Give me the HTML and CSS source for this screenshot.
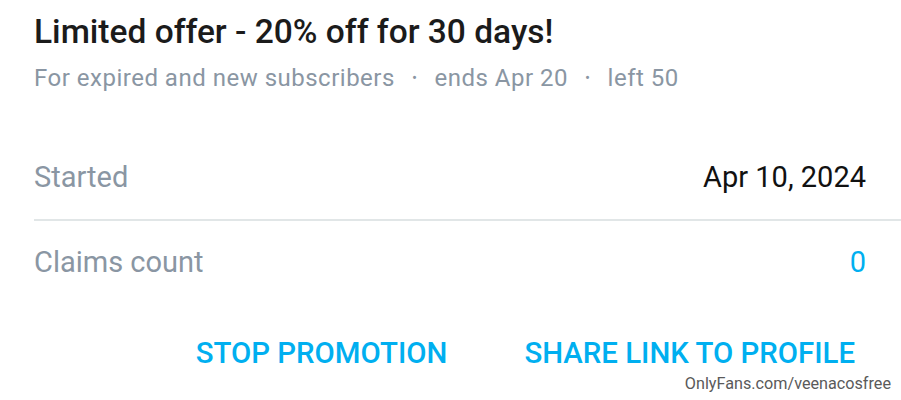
FILE: index.html
```html
<!DOCTYPE html>
<html>
<head>
<meta charset="utf-8">
<link rel="stylesheet" href="styles.css">
</head>
<body>
<div class="page">
  <h1 class="title">Limited offer - 20% off for 30 days!</h1>
  <div class="sub">
    <span>For expired and new subscribers</span>
    <span class="dot">•</span>
    <span>ends Apr 20</span>
    <span class="dot">•</span>
    <span>left 50</span>
  </div>
  <div class="rows">
    <div class="row first">
      <span class="label">Started</span>
      <span class="value">Apr 10, 2024</span>
    </div>
    <div class="row second">
      <span class="label">Claims count</span>
      <span class="value blue">0</span>
    </div>
  </div>
  <div class="actions">
    <button class="btn">STOP PROMOTION</button>
    <button class="btn">SHARE LINK TO PROFILE</button>
  </div>
</div>
<div class="watermark">OnlyFans.com/veenacosfree</div>
</body>
</html>
```

FILE: styles.css
```css
* { box-sizing: border-box; }
html, body { margin: 0; padding: 0; background: #fff; }
body {
  font-family: Roboto, "Noto Sans", sans-serif;
  width: 901px;
  height: 400px;
  overflow: hidden;
  position: relative;
}
.page {
  padding: 12px 0 0 34px;
}
.title {
  margin: 0;
  font-size: 33.5px;
  font-weight: 500;
  color: #1b1b1b;
  line-height: 40px;
}
.sub {
  margin-top: 10px;
  font-size: 24px;
  letter-spacing: 0.5px;
  color: #8a96a3;
  line-height: 32px;
  display: flex;
  align-items: center;
}
.sub .dot {
  font-size: 15px;
  padding: 0 17px;
}
.rows {
  margin-top: 40px;
}
.row {
  display: flex;
  justify-content: space-between;
  align-items: center;
  padding-right: 35px;
}
.row.first {
  height: 87px;
  border-bottom: 2px solid #e1e6e7;
}
.row.second {
  height: 81px;
}
.label {
  font-size: 29px;
  color: #8a96a3;
}
.value {
  font-size: 29px;
  color: #111;
}
.value.blue { color: #00aff0; }
.actions {
  display: flex;
  justify-content: flex-end;
  gap: 77px;
  padding-right: 46px;
  margin-top: 31px;
}
.btn {
  background: none;
  border: none;
  padding: 0;
  font-family: Roboto, sans-serif;
  font-weight: 500;
  font-size: 29.4px;
  color: #00aff0;
  line-height: 40px;
}
.watermark {
  position: absolute;
  right: 10px;
  bottom: 7px;
  font-family: Roboto, sans-serif;
  font-size: 16.2px;
  color: #5a5a5a;
}
```
